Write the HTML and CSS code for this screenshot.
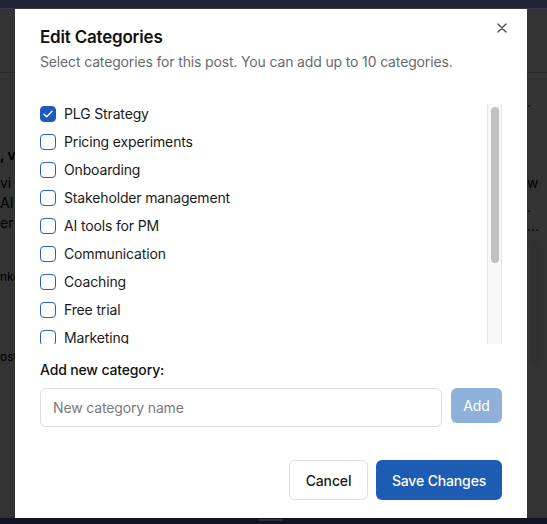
FILE: index.html
```html
<!DOCTYPE html>
<html lang="en">
<head>
<meta charset="utf-8">
<title>Edit Categories</title>
<link rel="stylesheet" href="styles.css">
</head>
<body>
<div class="topbar"></div>
<div class="page">
  <header class="page-header"></header>
  <main class="page-main">
    <div class="gutter left">
      <span class="frag strong">, v</span>
      <span class="frag f2">vi</span>
      <span class="frag">AI</span>
      <span class="frag">er</span>
      <span class="frag small f5">nke</span>
      <span class="frag small f6">ost</span>
    </div>
    <div class="spacer"></div>
    <div class="gutter right">
      <span class="frag r1">.</span>
      <span class="frag r2">w</span>
      <span class="frag r3">.</span>
      <span class="frag r4">...</span>
      <span class="side-card"></span>
    </div>
  </main>
  <div class="overlay"></div>
</div>
<div class="bottombar"><span class="indicator"></span></div>

<div class="modal" role="dialog" aria-labelledby="modal-title">
  <button class="close" aria-label="Close">
    <svg width="10" height="10" viewBox="0 0 10 10"><path d="M1 1L9 9M9 1L1 9" stroke="#555" stroke-width="1.5" stroke-linecap="round"/></svg>
  </button>
  <h2 id="modal-title" class="title">Edit Categories</h2>
  <p class="subtitle">Select categories for this post. You can add up to 10 categories.</p>

  <div class="list-wrap">
    <div class="list">
      <label class="row"><span class="box checked"><svg width="10" height="8" viewBox="0 0 10 8"><path d="M1 4.2L3.7 6.8L9 1.2" fill="none" stroke="#fff" stroke-width="1.4" stroke-linecap="round" stroke-linejoin="round"/></svg></span><span>PLG Strategy</span></label>
      <label class="row"><span class="box"></span><span>Pricing experiments</span></label>
      <label class="row"><span class="box"></span><span>Onboarding</span></label>
      <label class="row"><span class="box"></span><span>Stakeholder management</span></label>
      <label class="row"><span class="box"></span><span>AI tools for PM</span></label>
      <label class="row"><span class="box"></span><span>Communication</span></label>
      <label class="row"><span class="box"></span><span>Coaching</span></label>
      <label class="row"><span class="box"></span><span>Free trial</span></label>
      <label class="row"><span class="box"></span><span>Marketing</span></label>
    </div>
    <div class="scrollbar"><div class="thumb"></div></div>
  </div>

  <div class="add-label">Add new category:</div>
  <div class="add-row">
    <input class="add-input" type="text" placeholder="New category name">
    <button class="add-btn" disabled>Add</button>
  </div>

  <div class="footer">
    <button class="btn cancel">Cancel</button>
    <button class="btn save">Save Changes</button>
  </div>
</div>
</body>
</html>
```
FILE: styles.css
```css
* { box-sizing: border-box; }
html, body { margin: 0; height: 100%; }
body {
  font-family: Inter, "Noto Sans", "DejaVu Sans", sans-serif;
  display: flex;
  flex-direction: column;
  height: 524px;
  overflow: hidden;
  background: #fff;
}
.topbar {
  height: 9px;
  background: #1f2535;
  border-bottom: 1px solid #333a4b;
  flex: none;
}
.page {
  flex: 1;
  position: relative;
  background: #fff;
  overflow: hidden;
}
.page-header {
  height: 64px;
  border-bottom: 1px solid #c8c8c8;
}
.page-main {
  display: flex;
}
.spacer { flex: 1; }
.gutter {
  display: flex;
  flex-direction: column;
  flex: none;
}
.gutter.left { width: 15px; padding-top: 72px; }
.gutter.right { width: 20px; padding-top: 19px; }
.frag {
  font-size: 14px;
  line-height: 20px;
  color: #000;
  white-space: nowrap;
}
.frag.strong { font-weight: 700; }
.frag.f2 { margin-top: 8px; }
.frag.small { font-size: 12px; }
.frag.f5 { margin-top: 34px; }
.frag.f6 { margin-top: 60px; }
.frag.r2 { margin-top: 61px; }
.frag.r3 { margin-top: 4px; }
.frag.r4 { line-height: 18px; }
.side-card {
  display: block;
  width: 11px;
  height: 127px;
  margin: 5px 0 0 3px;
  border-radius: 6px;
  background: #f6f6f6;
}
.overlay {
  position: absolute;
  inset: 0;
  background: rgba(0, 0, 0, 0.8);
}
.bottombar {
  height: 6px;
  flex: none;
  background: #0f1422;
  position: relative;
}
.indicator {
  position: absolute;
  left: 259px;
  top: 1px;
  width: 24px;
  height: 2px;
  background: #2a3142;
}

.modal {
  position: fixed;
  left: 15px;
  top: 9px;
  width: 512px;
  height: 509px;
  background: #fff;
  padding: 14px 25px 18px;
  display: flex;
  flex-direction: column;
  color: #1a1a1a;
  letter-spacing: -0.15px;
}
.close {
  position: absolute;
  top: 9px;
  right: 15px;
  width: 20px;
  height: 20px;
  padding: 0;
  border: none;
  background: none;
  display: flex;
  align-items: center;
  justify-content: center;
}
.title {
  margin: 0;
  font-size: 17px;
  line-height: 28px;
  font-weight: 600;
  letter-spacing: -0.2px;
  color: #111;
}
.subtitle {
  margin: 1px 0 0;
  font-size: 14px;
  line-height: 20px;
  color: #6b6b6b;
}
.list-wrap {
  margin-top: 32px;
  height: 240px;
  display: flex;
  flex: none;
}
.list {
  flex: 1;
  overflow: hidden;
  display: flex;
  flex-direction: column;
  gap: 8px;
}
.scrollbar {
  width: 15px;
  flex: none;
  background: #f8f8f8;
  border-left: 1px solid #e6e6e6;
  border-right: 1px solid #e6e6e6;
  padding: 3px 2px 0 3px;
}
.thumb {
  height: 156px;
  background: #c1c1c1;
  border-radius: 5px;
}
.row {
  display: flex;
  align-items: center;
  gap: 8px;
  height: 20px;
  flex: none;
  font-size: 14px;
  line-height: 20px;
  color: #1a1a1a;
}
.box {
  width: 16px;
  height: 16px;
  border: 1.5px solid #2b62c0;
  border-radius: 4px;
  display: flex;
  align-items: center;
  justify-content: center;
  flex: none;
  background: #fff;
}
.box.checked {
  background: #1f5bbd;
  border-color: #1f5bbd;
}
.add-label {
  margin-top: 16px;
  font-size: 14px;
  line-height: 20px;
  font-weight: 500;
  color: #111;
}
.add-row {
  margin-top: 8px;
  display: flex;
  gap: 9px;
  align-items: flex-start;
}
.add-input {
  flex: 1;
  height: 39px;
  border: 1px solid #dcdcdc;
  border-radius: 6px;
  padding: 0 12px;
  font-family: inherit;
  font-size: 14px;
  letter-spacing: -0.15px;
  color: #1a1a1a;
  outline: none;
}
.add-input::placeholder { color: #7a7a7a; }
.add-btn {
  width: 51px;
  height: 35px;
  border: none;
  border-radius: 6px;
  background: #8fb0db;
  color: #fff;
  font-family: inherit;
  font-size: 14px;
  font-weight: 400;
  letter-spacing: -0.15px;
}
.footer {
  margin-top: 33px;
  display: flex;
  justify-content: flex-end;
  gap: 8px;
}
.btn {
  height: 40px;
  border-radius: 6px;
  font-family: inherit;
  font-size: 14px;
  font-weight: 500;
  letter-spacing: -0.15px;
}
.cancel {
  width: 79px;
  background: #fff;
  border: 1px solid #dcdcdc;
  color: #1a1a1a;
}
.save {
  width: 126px;
  background: #1e5bb2;
  border: none;
  color: #fff;
}
```
